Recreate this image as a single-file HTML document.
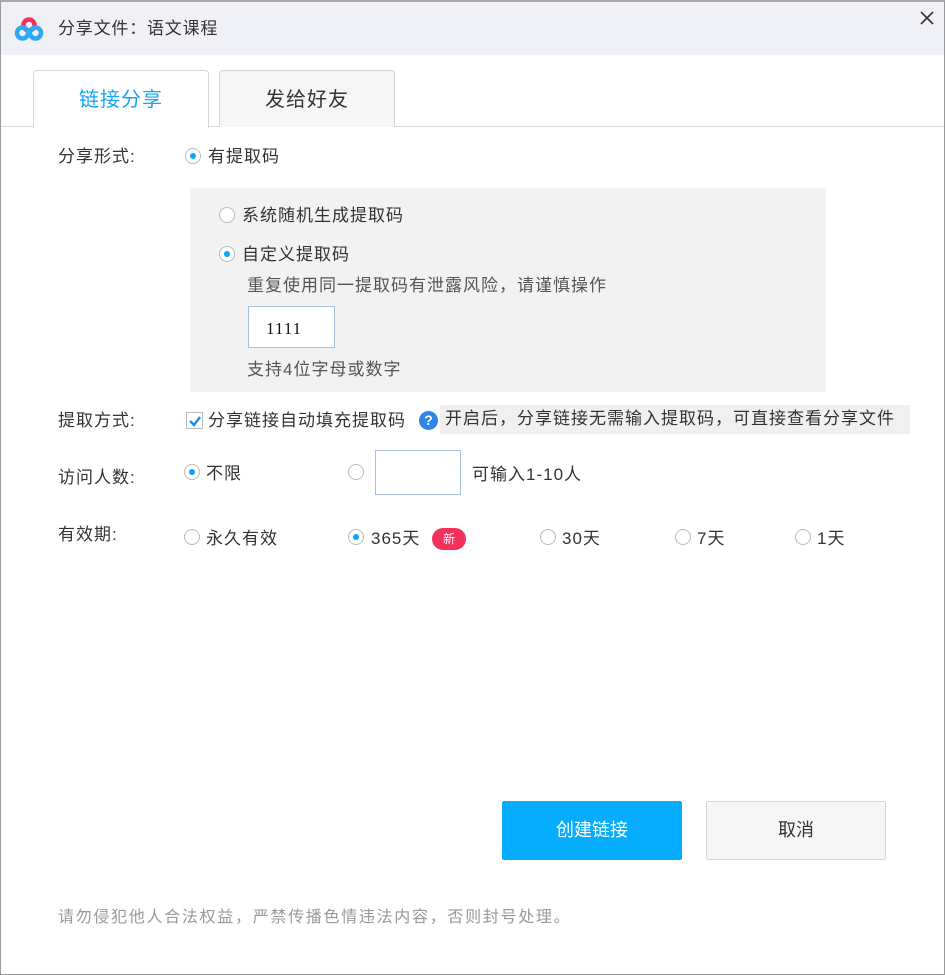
<!DOCTYPE html>
<html><head><meta charset="utf-8"><style>
*{margin:0;padding:0;box-sizing:border-box}
body{width:945px;height:975px;position:relative;background:#fff;font-family:"Liberation Sans","Noto Sans CJK SC",sans-serif;color:#333;overflow:hidden}
.a{position:absolute;white-space:nowrap;line-height:1}
.f16{font-size:17px;letter-spacing:1px}
.r{position:absolute;width:16px;height:16px;border:1px solid #bbb;border-radius:50%;background:#fff}
.r.on::after{content:"";position:absolute;left:4px;top:4px;width:6px;height:6px;border-radius:50%;background:#06a7ff}
</style></head><body>
<div class="a" style="left:0;top:0;width:945px;height:975px;border:1px solid #999;border-top:2px solid #aaa"></div>
<div class="a" style="left:1px;top:2px;width:943px;height:53px;background:#f0f1f6"></div>
<svg class="a" style="left:13px;top:16px" width="32" height="26" viewBox="0 0 32 26">
<circle cx="16" cy="9" r="5.5" fill="none" stroke="#f0325a" stroke-width="4.5"/>
<circle cx="9.5" cy="17" r="5.5" fill="none" stroke="#2da8f4" stroke-width="4.5"/>
<circle cx="22.5" cy="17" r="5.5" fill="none" stroke="#2da8f4" stroke-width="4.5"/>
</svg>
<div class="a" style="left:58px;top:20px;font-size:17px;letter-spacing:0.8px;color:#333">分享文件：语文课程</div>
<svg class="a" style="left:919px;top:10px" width="16" height="16"><path d="M2 2L14 14M14 2L2 14" stroke="#333" stroke-width="1.6"/></svg>
<div class="a" style="left:1px;top:126px;width:943px;height:1px;background:#d6d6d6"></div>
<div class="a" style="left:33px;top:70px;width:176px;height:58px;border:1px solid #d6d6d6;border-bottom:none;border-radius:4px 4px 0 0;background:#fff"></div>
<div class="a" style="left:33px;top:90px;width:176px;text-align:center;font-size:20px;letter-spacing:1px;color:#16a5f4">链接分享</div>
<div class="a" style="left:219px;top:70px;width:176px;height:57px;border:1px solid #d6d6d6;border-bottom:none;border-radius:4px 4px 0 0;background:#f6f6f6"></div>
<div class="a" style="left:219px;top:90px;width:176px;text-align:center;font-size:20px;letter-spacing:1px;color:#333">发给好友</div>

<div class="a f16" style="left:58px;top:148px">分享形式:</div>
<div class="r on" style="left:185px;top:148px"></div>
<div class="a f16" style="left:208px;top:148px">有提取码</div>

<div class="a" style="left:190px;top:188px;width:636px;height:204px;background:#f2f2f2"></div>
<div class="r" style="left:219px;top:207px"></div>
<div class="a f16" style="left:242px;top:207px">系统随机生成提取码</div>
<div class="r on" style="left:219px;top:246px"></div>
<div class="a f16" style="left:242px;top:246px">自定义提取码</div>
<div class="a f16" style="left:247px;top:277px;color:#555">重复使用同一提取码有泄露风险，请谨慎操作</div>
<div class="a" style="left:248px;top:306px;width:87px;height:42px;border:1px solid #a9bfe0;background:#fff"></div>
<div class="a" style="left:266px;top:320px;font-size:17px;font-family:'Liberation Serif',serif;color:#111;letter-spacing:1px">1111</div>
<div class="a f16" style="left:247px;top:361px;color:#555">支持4位字母或数字</div>

<div class="a f16" style="left:58px;top:412px">提取方式:</div>
<div class="a" style="left:186px;top:412px;width:17px;height:17px;border:1px solid #bbb;background:#fff"></div>
<svg class="a" style="left:188px;top:414px" width="14" height="14"><path d="M2 7L6 11L12 3" stroke="#1a8fe8" stroke-width="2.4" fill="none"/></svg>
<div class="a f16" style="left:208px;top:412px">分享链接自动填充提取码</div>
<div class="a" style="left:419px;top:411px;width:19px;height:19px;border-radius:50%;background:#2d86e8;color:#fff;font-size:14px;font-weight:bold;text-align:center;line-height:19px">?</div>
<div class="a" style="left:440px;top:405px;width:470px;height:29px;background:#f0f0f0"></div>
<div class="a f16" style="left:445px;top:410px">开启后，分享链接无需输入提取码，可直接查看分享文件</div>

<div class="a f16" style="left:58px;top:469px">访问人数:</div>
<div class="r on" style="left:184px;top:464px"></div>
<div class="a f16" style="left:206px;top:465px">不限</div>
<div class="r" style="left:348px;top:464px"></div>
<div class="a" style="left:375px;top:450px;width:86px;height:45px;border:1px solid #a9bfe0;background:#fff"></div>
<div class="a f16" style="left:472px;top:466px">可输入1-10人</div>

<div class="a f16" style="left:58px;top:526px">有效期:</div>
<div class="r" style="left:184px;top:529px"></div>
<div class="a f16" style="left:206px;top:530px">永久有效</div>
<div class="r on" style="left:348px;top:529px"></div>
<div class="a f16" style="left:371px;top:530px">365天</div>
<div class="a" style="left:432px;top:528px;width:34px;height:22px;border-radius:11px;background:#f2325c;color:#fff;font-size:12px;text-align:center;line-height:22px">新</div>
<div class="r" style="left:540px;top:529px"></div>
<div class="a f16" style="left:562px;top:530px">30天</div>
<div class="r" style="left:675px;top:529px"></div>
<div class="a f16" style="left:697px;top:530px">7天</div>
<div class="r" style="left:795px;top:529px"></div>
<div class="a f16" style="left:817px;top:530px">1天</div>

<div class="a" style="left:502px;top:801px;width:180px;height:59px;background:#06adff;border-radius:2px;color:#fff;font-size:18px;text-align:center;line-height:59px">创建链接</div>
<div class="a" style="left:706px;top:801px;width:180px;height:59px;background:#f6f6f6;border:1px solid #d6d6d6;border-radius:2px;color:#333;font-size:18px;text-align:center;line-height:57px">取消</div>

<div class="a" style="left:58px;top:910px;font-size:16px;letter-spacing:1.7px;color:#999">请勿侵犯他人合法权益，严禁传播色情违法内容，否则封号处理。</div>
</body></html>
